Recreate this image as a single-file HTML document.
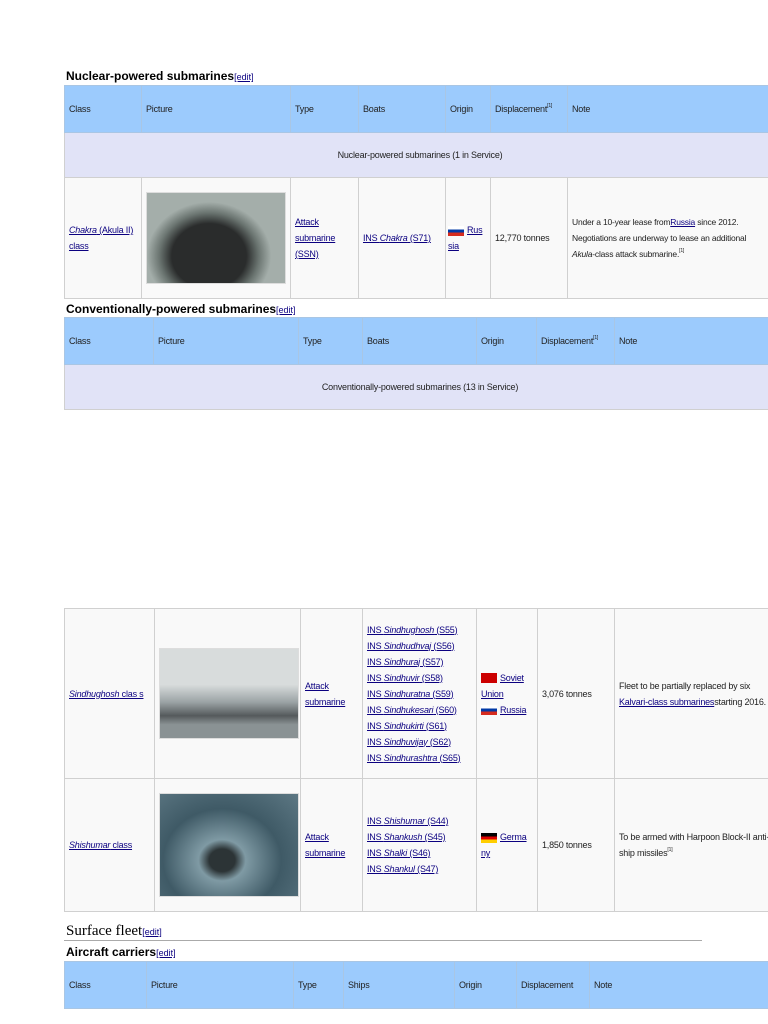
<!DOCTYPE html>
<html><head><meta charset="utf-8"><style>
body{margin:0;background:#fff;width:768px;height:1024px;overflow:hidden;position:relative;font-family:"Liberation Sans",sans-serif;font-size:9px;color:#222}
table{position:absolute;left:64px;border-collapse:collapse;table-layout:fixed;width:712px}
td{border:1px solid #d0d0d0;padding:0 4px;background:#f9f9f9;vertical-align:middle;line-height:16px;overflow:hidden;letter-spacing:-0.2px}
tr.h td{background:#9ccbfd;border-color:#a9c6e4;height:46px}
tr.g td{background:#e1e3f7;text-align:center;height:44px}
a{color:#0b0080;text-decoration:underline}
sup{font-size:5px;vertical-align:top;line-height:10px}
.e{font-size:9px;font-weight:normal;color:#0b0080;text-decoration:underline}
h3{position:absolute;left:66px;margin:0;font-size:12px;font-weight:bold;color:#000}
.img{width:138px;border:1px solid #ddd}
.fl{display:inline-block;width:16px;height:10px;vertical-align:middle;margin-right:3px}
.ru{background:linear-gradient(#fff 33%,#0039a6 33% 66%,#d52b1e 66%)}
.su{background:#cc0000}
.de{background:linear-gradient(#000 33%,#d00 33% 66%,#ffce00 66%)}
</style></head><body>
<h3 style="top:69px">Nuclear-powered submarines<span class="e">[edit]</span></h3>
<table style="top:85px">
<colgroup><col style="width:77px"><col style="width:149px"><col style="width:68px"><col style="width:87px"><col style="width:45px"><col style="width:77px"><col></colgroup>
<tr class="h"><td>Class</td><td>Picture</td><td>Type</td><td>Boats</td><td>Origin</td><td>Displacement<sup>[1]</sup></td><td>Note</td></tr>
<tr class="g"><td colspan="7">Nuclear-powered submarines (1 in Service)</td></tr>
<tr style="height:121px"><td><a><i>Chakra</i> (Akula II) class</a></td><td><div class="img" style="height:90px;background:radial-gradient(ellipse 45% 60% at 45% 70%,#2a2c2c 0 60%,#6a7470 80%,#a4aeaa 100%),#a4aeaa"></div></td><td><a>Attack submarine (SSN)</a></td><td><a>INS <i>Chakra</i> (S71)</a></td><td style="padding:0 2px"><span class="fl ru"></span><a>Rus sia</a></td><td>12,770 tonnes</td><td style="font-size:8.5px">Under a 10-year lease from<a>Russia</a> since 2012. Negotiations are underway to lease an additional <i>Akula</i>-class attack submarine.<sup>[1]</sup></td></tr>
</table>
<h3 style="top:302px">Conventionally-powered submarines<span class="e">[edit]</span></h3>
<table style="top:317px">
<colgroup><col style="width:89px"><col style="width:145px"><col style="width:64px"><col style="width:114px"><col style="width:60px"><col style="width:78px"><col></colgroup>
<tr class="h"><td>Class</td><td>Picture</td><td>Type</td><td>Boats</td><td>Origin</td><td>Displacement<sup>[1]</sup></td><td>Note</td></tr>
<tr class="g"><td colspan="7">Conventionally-powered submarines (13 in Service)</td></tr>
</table>
<table style="top:608px">
<colgroup><col style="width:90px"><col style="width:146px"><col style="width:62px"><col style="width:114px"><col style="width:61px"><col style="width:77px"><col></colgroup>
<tr style="height:170px"><td><a><i>Sindhughosh</i> clas s</a></td><td><div class="img" style="height:89px;background:linear-gradient(#d8dcdc 0 40%,#9aa2a4 60%,#555a5c 75%,#8a9294 85%)"></div></td><td><a>Attack submarine</a></td><td><a>INS <i>Sindhughosh</i> (S55)</a><br><a>INS <i>Sindhudhvaj</i> (S56)</a><br><a>INS <i>Sindhuraj</i> (S57)</a><br><a>INS <i>Sindhuvir</i> (S58)</a><br><a>INS <i>Sindhuratna</i> (S59)</a><br><a>INS <i>Sindhukesari</i> (S60)</a><br><a>INS <i>Sindhukirti</i> (S61)</a><br><a>INS <i>Sindhuvijay</i> (S62)</a><br><a>INS <i>Sindhurashtra</i> (S65)</a></td><td><span class="fl su"></span><a>Soviet Union</a><br><span class="fl ru"></span><a>Russia</a></td><td>3,076 tonnes</td><td>Fleet to be partially replaced by six <a>Kalvari-class submarines</a>starting 2016.</td></tr>
<tr style="height:133px"><td><a><i>Shishumar</i> class</a></td><td><div class="img" style="height:102px;background:radial-gradient(ellipse at 45% 65%,#2c3436 0 12%,#7f9aa4 22%,#3f5a66 55%,#5d7884)"></div></td><td><a>Attack submarine</a></td><td><a>INS <i>Shishumar</i> (S44)</a><br><a>INS <i>Shankush</i> (S45)</a><br><a>INS <i>Shalki</i> (S46)</a><br><a>INS <i>Shankul</i> (S47)</a></td><td><span class="fl de"></span><a>Germa ny</a></td><td>1,850 tonnes</td><td>To be armed with Harpoon Block-II anti-ship missiles<sup>[1]</sup></td></tr>
</table>
<div style="position:absolute;left:66px;top:923px;font-family:'Liberation Serif',serif;font-size:15px;color:#000">Surface fleet<span class="e" style="font-family:'Liberation Sans',sans-serif">[edit]</span></div>
<div style="position:absolute;left:64px;top:940px;width:638px;height:1px;background:#aaa"></div>
<h3 style="top:945px">Aircraft carriers<span class="e">[edit]</span></h3>
<table style="top:961px">
<colgroup><col style="width:82px"><col style="width:147px"><col style="width:50px"><col style="width:111px"><col style="width:62px"><col style="width:73px"><col></colgroup>
<tr class="h"><td>Class</td><td>Picture</td><td>Type</td><td>Ships</td><td>Origin</td><td>Displacement</td><td>Note</td></tr>
</table>
</body></html>
